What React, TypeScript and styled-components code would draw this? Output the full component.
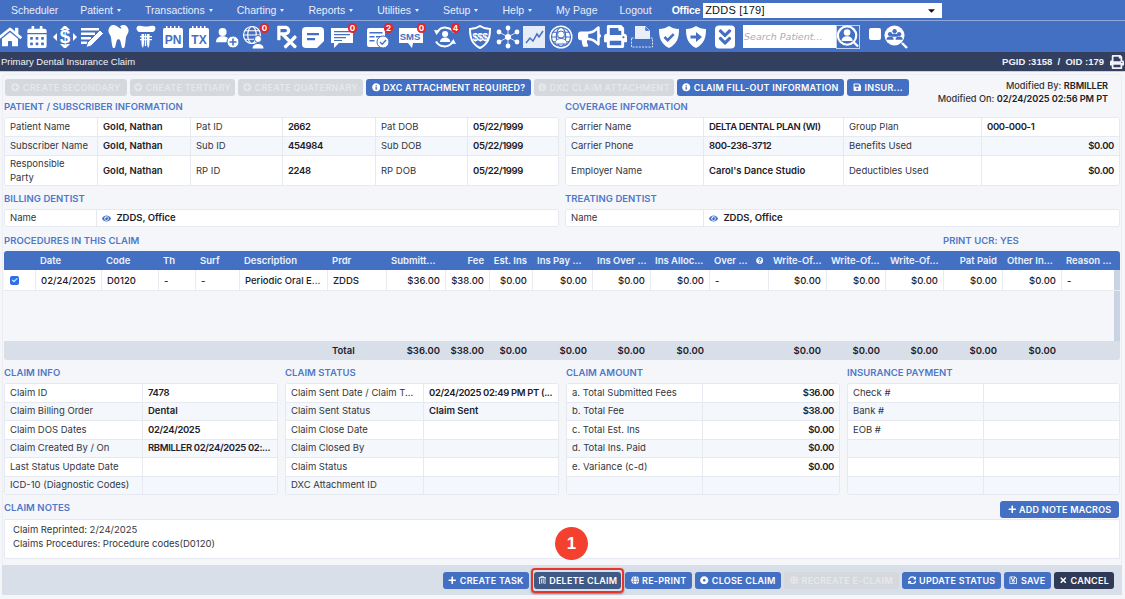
import React from "react";
import styled, { createGlobalStyle } from "styled-components";
import {
  FaHome,
  FaCalendarAlt,
  FaTooth,
  FaPrescription,
  FaBullhorn,
  FaPrint,
  FaAngleDoubleDown,
  FaInfoCircle,
  FaPlusCircle,
  FaPlus,
  FaEye,
  FaQuestionCircle,
  FaRegTrashAlt,
  FaRegSave,
  FaSave,
  FaTimes,
  FaSyncAlt,
  FaDotCircle,
  FaGlobe,
  FaCaretDown,
} from "react-icons/fa";

const BLUE = "#4470c4";
const DARK = "#333f5e";

const GlobalStyle = createGlobalStyle`
  html, body { margin: 0; padding: 0; background: #f5f6f9; }
  body { font-family: "Inter", "Liberation Sans", sans-serif; color: #1f2430; overflow: hidden; }
`;

const Page = styled.div`
  width: 1125px;
  height: 599px;
  position: relative;
  overflow: hidden;
`;

const MenuBar = styled.div`
  height: 20px;
  background: ${BLUE};
  border-bottom: 1px solid #8ea8dc;
  display: flex;
  align-items: center;
  padding-left: 11px;
  gap: 22px;
  font-family: "Liberation Sans", Arial, sans-serif;
  font-size: 10.5px;
  color: #e8eefa;
`;

const MenuItem = styled.span<{ $caret?: boolean }>`
  white-space: nowrap;
  &::after {
    content: "";
    display: ${(p) => (p.$caret ? "inline-block" : "none")};
    border-left: 2.5px solid transparent;
    border-right: 2.5px solid transparent;
    border-top: 3px solid #e8eefa;
    margin: 0 2px 0 4px;
    vertical-align: 2px;
  }
`;

const OfficeLabel = styled.span`
  margin-left: -2px;
  color: #fff;
  font-weight: 700;
  letter-spacing: -0.2px;
`;

const OfficeSelect = styled.div`
  width: 239px;
  height: 15px;
  margin-left: -19px;
  background: #fff;
  color: #111;
  display: flex;
  align-items: center;
  justify-content: space-between;
  padding: 0 5px 0 2px;
  box-sizing: border-box;
  font-size: 11px;
  letter-spacing: 0.2px;
`;

const IconBar = styled.div`
  height: 31px;
  background: ${BLUE};
  display: flex;
  align-items: center;
`;

const IconCell = styled.div<{ $gap: number }>`
  width: 24px;
  height: 24px;
  margin-left: ${(p) => p.$gap}px;
  flex: none;
  position: relative;
  color: #fff;
  display: flex;
  align-items: center;
  justify-content: center;
  svg { display: block; }
`;

const Badge = styled.span`
  position: absolute;
  top: -2px;
  right: -3px;
  min-width: 9px;
  height: 10px;
  border-radius: 5px;
  background: #e5252a;
  color: #fff;
  font-size: 8px;
  font-weight: 700;
  line-height: 10px;
  text-align: center;
`;

const SearchInput = styled.div`
  width: 93px;
  height: 23px;
  margin-left: 6px;
  background: #fff;
  color: #a9adb5;
  font-family: "DejaVu Sans", sans-serif;
  font-style: italic;
  font-size: 9.5px;
  line-height: 23px;
  padding-left: 1px;
  box-sizing: border-box;
  white-space: nowrap;
`;

const SearchButton = styled.div`
  width: 24px;
  height: 24px;
  background: #4470c4;
  border: 1px solid #c4d3ef;
  box-sizing: border-box;
  display: flex;
  align-items: center;
  justify-content: center;
`;

const TinyCheck = styled.div`
  width: 12px;
  height: 12px;
  margin: -5px 3px 0 9px;
  background: #fff;
  border-radius: 2px;
`;

const TitleBar = styled.div`
  height: 19px;
  background: ${DARK};
  color: #f1f3f8;
  font-family: "Liberation Sans", Arial, sans-serif;
  font-size: 9.5px;
  display: flex;
  align-items: center;
  justify-content: space-between;
  padding: 0 1px;
  border-bottom: 1px solid #c9ced8;
`;

const TitleRight = styled.div`
  display: flex;
  align-items: center;
  gap: 6px;
  font-weight: 700;
`;

const Content = styled.div`
  margin: 2px 3px 0 2px;
  padding: 4px 3px 0 3px;
  border: 1px solid #eceef3;
  border-bottom: none;
  border-radius: 4px 4px 0 0;
  box-sizing: border-box;
  position: relative;
`;

const ActionRow = styled.div`
  display: flex;
  gap: 3px;
  height: 17px;
  margin-left: -1px;
  position: relative;
`;

const Btn = styled.div<{ $w: number; $variant?: "blue" | "off" | "dark" | "slate" }>`
  width: ${(p) => p.$w}px;
  height: 17px;
  flex: none;
  box-sizing: border-box;
  border-radius: 3px;
  display: flex;
  align-items: center;
  justify-content: center;
  gap: 3px;
  font-size: 9px;
  font-weight: 600;
  white-space: nowrap;
  letter-spacing: 0.25px;
  color: ${(p) => (p.$variant === "off" ? "#e6e8ec" : "#fff")};
  background: ${(p) =>
    p.$variant === "off"
      ? "#d5d8dd"
      : p.$variant === "dark"
      ? "#2f3a56"
      : p.$variant === "slate"
      ? "#3f5a86"
      : BLUE};
  svg { flex: none; font-size: 8.5px; }
`;

const Modified = styled.div`
  position: absolute;
  right: 10px;
  top: 0;
  font-size: 9.2px;
  line-height: 13px;
  text-align: right;
  font-weight: 500;
  color: #333;
  b { font-weight: 600; color: #222; letter-spacing: -0.1px; }
`;

const TwoCols = styled.div<{ $top: number }>`
  display: grid;
  grid-template-columns: 555px 555px;
  column-gap: 6px;
  margin: ${(p) => p.$top}px 0 0 -2px;
`;

const FourCols = styled.div`
  display: grid;
  grid-template-columns: 274px 274px 274px 273px;
  column-gap: 7px;
  margin-left: -2px;
`;

const SectionTitle = styled.div<{ $indent?: number }>`
  font-size: 9.5px;
  font-weight: 600;
  color: #4f78c8;
  height: 11px;
  line-height: 11px;
  margin: 0 0 5px;
  padding-left: ${(p) => p.$indent ?? 0}px;
  letter-spacing: 0.05px;
  white-space: nowrap;
`;

const Card = styled.div`
  background: #fff;
  border: 1px solid #e6e9f0;
  border-radius: 3px;
  overflow: hidden;
`;

const Row = styled.div<{ $cols: string; $h: number; $alt?: boolean }>`
  display: grid;
  grid-template-columns: ${(p) => p.$cols};
  height: ${(p) => p.$h}px;
  background: ${(p) => (p.$alt ? "#f4f7fc" : "#fff")};
  & + & { border-top: 1px solid #e6e9f0; }
`;

const Cell = styled.div<{ $bold?: boolean; $right?: boolean; $tight?: boolean }>`
  display: flex;
  align-items: center;
  justify-content: ${(p) => (p.$right ? "flex-end" : "flex-start")};
  gap: 3px;
  padding: 0 5px;
  min-width: 0;
  overflow: hidden;
  font-size: 9.5px;
  line-height: 14px;
  font-weight: ${(p) => (p.$bold ? 600 : 400)};
  letter-spacing: ${(p) => (p.$tight ? "-0.35px" : "0")};
  color: ${(p) => (p.$bold ? "#1d2029" : "#33363e")};
  white-space: pre;
  & + & { border-left: 1px solid #e6e9f0; }
  svg { color: ${BLUE}; font-size: 9px; }
`;

const PROC_COLS = "31px 66px 57px 37px 44px 88px 59px 59px 44px 43px 60px 58px 59px 59px 58px 59px 58px 59px 59px 53px 6px";

const ProcTable = styled.div`
  border-radius: 3px;
  overflow: hidden;
  margin: 0 0 7px -2px;
  width: 1116px;
  height: 109px;
  display: flex;
  flex-direction: column;
  background: #f5f6f9;
`;

const ProcRow = styled.div<{ $kind: "head" | "body" | "total" }>`
  display: grid;
  grid-template-columns: ${PROC_COLS};
  height: ${(p) => (p.$kind === "body" ? 21 : 19)}px;
  flex: none;
  background: ${(p) => (p.$kind === "head" ? BLUE : p.$kind === "total" ? "#d9dfe9" : "#fff")};
  color: ${(p) => (p.$kind === "head" ? "#eef2fb" : "#1d2029")};
  font-size: 9.5px;
  font-weight: ${(p) => (p.$kind === "body" ? 500 : 600)};
  border-bottom: ${(p) => (p.$kind === "body" ? "1px solid #e9ebf0" : "none")};
  box-sizing: border-box;
`;

const ProcCell = styled.div<{ $right?: boolean; $line?: boolean }>`
  display: flex;
  align-items: center;
  justify-content: ${(p) => (p.$right ? "flex-end" : "flex-start")};
  padding: 0 5px;
  white-space: nowrap;
  min-width: 0;
  gap: 8px;
  border-left: ${(p) => (p.$line ? "1px solid #e9ebf0" : "none")};
  svg { font-size: 9px; }
`;

const ProcSpacer = styled.div`
  flex: 1;
  display: flex;
  justify-content: flex-end;
`;

const ScrollTrack = styled.div`
  width: 6px;
  background: #c9d3e3;
`;

const CheckBox = styled.span`
  width: 9px;
  height: 9px;
  border-radius: 2px;
  background: #2f6fe6;
  color: #fff;
  font-size: 8px;
  line-height: 9px;
  text-align: center;
  margin-left: 1px;
`;

const NotesHead = styled.div`
  display: flex;
  justify-content: space-between;
  align-items: flex-start;
  height: 18px;
  margin: 6px -1px 0 -2px;
  ${SectionTitle} { margin-top: 1px; }
`;

const NotesBox = styled.div`
  background: #fff;
  border: 1px solid #e6e9f0;
  height: 40px;
  margin: 0 0 0 -2px;
  width: 1116px;
  box-sizing: border-box;
  padding: 3px 8px;
  font-size: 9.5px;
  line-height: 14px;
  color: #33363e;
`;

const Footer = styled.div`
  margin: 6px -4px 0 -4px;
  height: 30px;
  background: #d9dfe9;
  display: flex;
  justify-content: flex-end;
  align-items: center;
  gap: 3px;
  padding-right: 8px;
`;

const DeleteRing = styled.div`
  position: relative;
  display: flex;
  margin: 0 1px 0 2px;
  &::after {
    content: "";
    position: absolute;
    inset: -4px -3px;
    border: 2px solid #e6352b;
    border-radius: 4px;
    box-shadow: 0 1px 2px rgba(0, 0, 0, 0.45);
  }
`;

const StepBubble = styled.div`
  position: absolute;
  left: 555px;
  top: 527px;
  width: 33px;
  height: 33px;
  border-radius: 50%;
  background: #f4402f;
  color: #fff;
  font-family: "Liberation Sans", Arial, sans-serif;
  font-size: 17px;
  font-weight: 700;
  display: flex;
  align-items: center;
  justify-content: center;
`;

// ---- hand drawn toolbar icons ----
const S: React.FC<{ children: React.ReactNode; size?: number }> = ({ children, size = 24 }) => (
  <svg width={size} height={size} viewBox="0 0 24 24" fill="#fff">
    {children}
  </svg>
);

const UserShape = ({ x, y, s = 1, fill = "#fff" }: { x: number; y: number; s?: number; fill?: string }) => (
  <g transform={`translate(${x} ${y}) scale(${s})`} fill={fill}>
    <circle cx="6" cy="3.6" r="3.6" />
    <path d="M0 13c0-3.6 2.6-5.4 6-5.4s6 1.8 6 5.4z" />
  </g>
);

const GlobeLines = ({ cx, cy, r, color = "#fff" }: { cx: number; cy: number; r: number; color?: string }) => (
  <g fill="none" stroke={color} strokeWidth="1.2">
    <circle cx={cx} cy={cy} r={r} />
    <ellipse cx={cx} cy={cy} rx={r / 2} ry={r} />
    <path d={`M${cx - r} ${cy}h${2 * r}M${cx - r + 1.2} ${cy - r / 2}h${2 * r - 2.4}M${cx - r + 1.2} ${cy + r / 2}h${2 * r - 2.4}`} />
  </g>
);

const Lettered = ({ t }: { t: string }) => (
  <S>
    <path d="M5 1h1.5v3H5zM9 1h1.5v3H9zM13 1h1.5v3H13zM17 1h1.5v3H17z" />
    <rect x="2" y="3" width="20" height="20" rx="1.5" />
    <text x="12" y="19" fontSize="12" fontWeight="700" textAnchor="middle" fontFamily="Liberation Sans" fill={BLUE}>
      {t}
    </text>
  </S>
);

const DollarIcon = () => (
  <S>
    <text x="12" y="18" fontSize="19" fontWeight="700" textAnchor="middle" fontFamily="Liberation Sans" fill="#fff">$</text>
    <path d="M0 12l4-4v8zM24 12l-4-4v8zM7 5l4-4 2 0 4 4-3 0-2-1-2 1zM7 19l3 0 2 1 2-1 3 0-4 4-2 0z" />
  </S>
);

const NotesPen = () => (
  <S>
    <path d="M1 3h18v2.5H1zM1 7.5h14V10H1zM1 12h10v2.5H1zM1 16.5h6V19H1z" />
    <path d="M20 5l3.5 3.5L11 21l-5 1.5L7.5 17.5z" stroke={BLUE} strokeWidth="1" />
  </S>
);

const ImplantIcon = () => (
  <S>
    <path d="M4 1c3-1 5 .5 8 .5S17 0 20 1c2.5 1 1.5 5-1 6H5C2.500 6 1.500 2 4 1z" />
    <path d="M7.500 9h2.500v10l-1 4c-1-1-1.500-3-1.500-5zM13 9h2.500v9c0 2-.5 4-1.500 5l-1-4zM10.800 9h1.400v12h-1.400z" />
    <path d="M6 11h12v1.200H6zM6 14h12v1.200H6z" />
  </S>
);

const UserAdd = () => (
  <S>
    <UserShape x={1} y={3} s={1.1} />
    <circle cx="18" cy="17" r="6" stroke={BLUE} strokeWidth="1" />
    <path d="M17.200 13.500h1.600v2.700h2.700v1.600h-2.700v2.700h-1.600v-2.700h-2.700v-1.600h2.700z" fill={BLUE} />
  </S>
);

const GlobeUser = () => (
  <S>
    <GlobeLines cx={10} cy={10} r={8.500} />
    <circle cx="16" cy="14" r="3.500" stroke={BLUE} />
    <path d="M10 24c0-4 3-5.500 6-5.500s6 1.500 6 5.500z" stroke={BLUE} />
  </S>
);

const StickyNote = () => (
  <S>
    <path d="M5 2h14a4 4 0 0 1 4 4v10l-7 7H5a4 4 0 0 1-4-4V6a4 4 0 0 1 4-4z" />
    <path d="M6 8h12v2.200H6zM6 13h8v2.200H6z" fill={BLUE} />
  </S>
);

const ChatLines = () => (
  <S>
    <path d="M1 3h22v15H9l-5 5v-5H1z" />
    <path d="M4 6h16v1.300H4zM4 9h16v1.300H4zM4 12h12v1.300H4zM4 15h8v1H4z" fill={BLUE} />
  </S>
);

const ListCheck = () => (
  <S>
    <rect x="1" y="3" width="18" height="19" rx="2" />
    <path d="M3.500 7h13v1.500h-13zM3.500 11h5v1.500h-5zM10 11h6v1.500h-6zM3.500 15h5v1.500h-5z" fill={BLUE} />
    <circle cx="17" cy="17" r="6" stroke={BLUE} />
    <path d="M14 17l2.200 2.200L20 15" fill="none" stroke={BLUE} strokeWidth="1.400" />
  </S>
);

const SmsIcon = () => (
  <S>
    <path d="M0 3h24v15H14l-1 5-4-5H0z" />
    <text x="11" y="15" fontSize="9.500" fontWeight="700" textAnchor="middle" fontFamily="Liberation Sans" fill={BLUE}>SMS</text>
  </S>
);

const RefreshUser = () => (
  <S>
    <path d="M4.500 6.500A10 10 0 0 1 21 7.500" fill="none" stroke="#fff" strokeWidth="2" />
    <path d="M19.500 17.500A10 10 0 0 1 3 16.500" fill="none" stroke="#fff" strokeWidth="2" />
    <path d="M1 5l6 .5-3.500 4.500zM23 19l-6-.5 3.500-4.500z" />
    <UserShape x={7} y={6} s={0.85} />
  </S>
);

const ShieldShape = () => <path d="M12 1c3 2 6 3 10 3 0 9-2 15-10 19C4 19 2 13 2 4c4 0 7-1 10-3z" />;

const ShieldDollar = () => (
  <S>
    <path d="M12 1c3 2 6 3 10 3 0 9-2 15-10 19C4 19 2 13 2 4c4 0 7-1 10-3z" fill="none" stroke="#fff" strokeWidth="2" />
    <text x="12" y="16" fontSize="10" fontWeight="700" textAnchor="middle" fontFamily="Liberation Sans" fill="#fff" letterSpacing="-0.5">$$$</text>
  </S>
);

const NetworkIcon = () => {
  const spots = [[12, 3], [12, 21], [3, 7], [21, 7], [3, 17], [21, 17]];
  return (
    <S>
      <g stroke="#fff" strokeWidth="0.800">
        {spots.map(([x, y], i) => (
          <line key={i} x1="12" y1="12" x2={x} y2={y} />
        ))}
      </g>
      <circle cx="12" cy="12" r="3" />
      {spots.map(([x, y], i) => (
        <circle key={i} cx={x} cy={y} r="2.400" />
      ))}
    </S>
  );
};

const ChartBox = () => (
  <S>
    <rect x="1" y="1" width="22" height="22" fill="#e6edf8" />
    <path d="M4 18l4-5 3 3 4-7 2 3 4-6" fill="none" stroke={BLUE} strokeWidth="1.500" />
  </S>
);

const GlobeFilled = () => (
  <S>
    <circle cx="12" cy="12" r="11.500" />
    <GlobeLines cx={12} cy={12} r={9.500} color={BLUE} />
    <circle cx="12" cy="9.500" r="3.500" stroke={BLUE} />
    <path d="M6 19c0-4 3-5.500 6-5.500s6 1.500 6 5.500z" stroke={BLUE} />
  </S>
);

const DocScan = () => (
  <S>
    <path d="M5 1h10l5 5v8H5z" fill="#e9eef9" />
    <path d="M15 1l5 5h-5z" fill={BLUE} stroke="#e9eef9" strokeWidth="0.500" />
    <rect x="1.500" y="13" width="21" height="9" fill="none" stroke="#dfe6f5" strokeWidth="1" strokeDasharray="2 1.200" />
  </S>
);

const ShieldCheck = () => (
  <S>
    <ShieldShape />
    <path d="M7.500 12l3.200 3.200 6-6" fill="none" stroke={BLUE} strokeWidth="2.600" />
  </S>
);

const ShieldArrow = () => (
  <S>
    <ShieldShape />
    <path d="M6.500 10.500h5.500V7l6 5-6 5v-3.500H6.500z" fill={BLUE} />
  </S>
);

const ChevronTile = () => (
  <S>
    <rect x="2" y="0.500" width="20" height="23" rx="4" />
    <foreignObject x="2" y="2" width="20" height="20">
      <FaAngleDoubleDown color={BLUE} size={20} />
    </foreignObject>
  </S>
);

const UserSearch = () => (
  <S size={23}>
    <circle cx="11" cy="11" r="10" fill="none" stroke="#fff" strokeWidth="2.400" />
    <UserShape x={5} y={4} s={1} />
    <path d="M18 18l5 5" stroke="#fff" strokeWidth="2.400" />
  </S>
);

const GroupSearch = () => (
  <S>
    <circle cx="10.500" cy="10.500" r="10" />
    <UserShape x={7} y={4} s={0.6} fill={BLUE} />
    <UserShape x={2.500} y={7} s={0.6} fill={BLUE} />
    <UserShape x={11.500} y={7} s={0.6} fill={BLUE} />
    <path d="M18 18l5 5" stroke="#fff" strokeWidth="2.400" />
  </S>
);

const toolbar: { gap: number; icon: React.ReactNode; badge?: string }[] = [
  { gap: -2, icon: <FaHome size={24} /> },
  { gap: 3, icon: <FaCalendarAlt size={22} /> },
  { gap: 4, icon: <DollarIcon /> },
  { gap: 3, icon: <NotesPen /> },
  { gap: 2, icon: <FaTooth size={23} /> },
  { gap: 4, icon: <ImplantIcon /> },
  { gap: 3, icon: <Lettered t="PN" /> },
  { gap: 2, icon: <Lettered t="TX" /> },
  { gap: 4, icon: <UserAdd /> },
  { gap: 3, icon: <GlobeUser />, badge: "0" },
  { gap: 9, icon: <FaPrescription size={26} /> },
  { gap: 2, icon: <StickyNote /> },
  { gap: 5, icon: <ChatLines />, badge: "0" },
  { gap: 12, icon: <ListCheck />, badge: "2" },
  { gap: 9, icon: <SmsIcon />, badge: "0" },
  { gap: 10, icon: <RefreshUser />, badge: "4" },
  { gap: 11, icon: <ShieldDollar /> },
  { gap: 4, icon: <NetworkIcon /> },
  { gap: 2, icon: <ChartBox /> },
  { gap: 3, icon: <GlobeFilled /> },
  { gap: 4, icon: <FaBullhorn size={23} /> },
  { gap: 2, icon: <FaPrint size={23} /> },
  { gap: 3, icon: <DocScan /> },
  { gap: 3, icon: <ShieldCheck /> },
  { gap: 3, icon: <ShieldArrow /> },
  { gap: 5, icon: <ChevronTile /> },
];

const menus: [string, boolean][] = [
  ["Scheduler", false],
  ["Patient", true],
  ["Transactions", true],
  ["Charting", true],
  ["Reports", true],
  ["Utilities", true],
  ["Setup", true],
  ["Help", true],
  ["My Page", false],
  ["Logout", false],
];

const PATIENT_COLS = "92px 93px 92px 93px 92px 1fr";
const COVER_COLS = "137px 140px 138px 1fr";
const NAME_COLS = "91px 1fr";
const HALF_COLS = "137px 1fr";

// digits and capitals run wide in this font, so those values get pulled in
const isWide = (v: string) => /\d|[A-Z]{3}/.test(v);

const patientRows = [
  ["Patient Name", "Gold, Nathan", "Pat ID", "2662", "Pat DOB", "05/22/1999"],
  ["Subscriber Name", "Gold, Nathan", "Sub ID", "454984", "Sub DOB", "05/22/1999"],
  ["Responsible\nParty", "Gold, Nathan", "RP ID", "2248", "RP DOB", "05/22/1999"],
];

const coverageRows = [
  ["Carrier Name", "DELTA DENTAL PLAN (WI)", "Group Plan", "000-000-1"],
  ["Carrier Phone", "800-236-3712", "Benefits Used", "$0.00"],
  ["Employer Name", "Carol's Dance Studio", "Deductibles Used", "$0.00"],
];

const procHead: [React.ReactNode, boolean][] = [
  ["", false], ["Date", false], ["Code", false], ["Th", false], ["Surf", false], ["Description", false],
  ["Prdr", false], ["Submitt...", false], ["Fee", true], ["Est. Ins", true], ["Ins Pay ...", false],
  ["Ins Over ...", false], ["Ins Alloc...", false],
  [<>Over ... <FaQuestionCircle /></>, false],
  ["Write-Of...", false], ["Write-Of...", false], ["Write-Of...", false], ["Pat Paid", true],
  ["Other In...", false], ["Reason ...", false], ["", false],
];

const money = "$0.00";
const procBody: [React.ReactNode, boolean][] = [
  [<CheckBox>✓</CheckBox>, false], ["02/24/2025", false], ["D0120", false], ["-", false], ["-", false],
  ["Periodic Oral E...", false], ["ZDDS", false], ["$36.00", true], ["$38.00", true], [money, true], [money, true],
  [money, true], [money, true], ["-", false], [money, true], [money, true], [money, true], [money, true], [money, true], ["-", false],
];

const procTotal: [string, boolean][] = [
  ["", false], ["", false], ["", false], ["", false], ["", false], ["", false], ["Total", false],
  ["$36.00", true], ["$38.00", true], [money, true], [money, true], [money, true], [money, true], ["", false],
  [money, true], [money, true], [money, true], [money, true], [money, true], ["", false], ["", false],
];

const infoBlocks: { title: string; cols: string; right?: boolean; rows: [string, string][] }[] = [
  {
    title: "CLAIM INFO",
    cols: HALF_COLS,
    rows: [
      ["Claim ID", "7478"],
      ["Claim Billing Order", "Dental"],
      ["Claim DOS Dates", "02/24/2025"],
      ["Claim Created By / On", "RBMILLER 02/24/2025 02:..."],
      ["Last Status Update Date", ""],
      ["ICD-10 (Diagnostic Codes)", ""],
    ],
  },
  {
    title: "CLAIM STATUS",
    cols: HALF_COLS,
    rows: [
      ["Claim Sent Date / Claim T...", "02/24/2025 02:49 PM PT (..."],
      ["Claim Sent Status", "Claim Sent"],
      ["Claim Close Date", ""],
      ["Claim Closed By", ""],
      ["Claim Status", ""],
      ["DXC Attachment ID", ""],
    ],
  },
  {
    title: "CLAIM AMOUNT",
    cols: "135px 1fr",
    right: true,
    rows: [
      ["a. Total Submitted Fees", "$36.00"],
      ["b. Total Fee", "$38.00"],
      ["c. Total Est. Ins", "$0.00"],
      ["d. Total Ins. Paid", "$0.00"],
      ["e. Variance (c-d)", "$0.00"],
      ["", ""],
    ],
  },
  {
    title: "INSURANCE PAYMENT",
    cols: "135px 1fr",
    rows: [
      ["Check #", ""],
      ["Bank #", ""],
      ["EOB #", ""],
      ["", ""],
      ["", ""],
      ["", ""],
    ],
  },
];

export default function App() {
  return (
    <Page>
      <GlobalStyle />
      <MenuBar>
        {menus.map(([label, caret]) => (
          <MenuItem key={label} $caret={caret}>
            {label}
          </MenuItem>
        ))}
        <OfficeLabel>Office</OfficeLabel>
        <OfficeSelect>
          ZDDS [179]
          <FaCaretDown size={11} />
        </OfficeSelect>
      </MenuBar>
      <IconBar>
        {toolbar.map((t, i) => (
          <IconCell key={i} $gap={t.gap}>
            {t.icon}
            {t.badge && <Badge>{t.badge}</Badge>}
          </IconCell>
        ))}
        <SearchInput>Search Patient...</SearchInput>
        <SearchButton>
          <UserSearch />
        </SearchButton>
        <TinyCheck />
        <IconCell $gap={0}>
          <GroupSearch />
        </IconCell>
      </IconBar>
      <TitleBar>
        <span>Primary Dental Insurance Claim</span>
        <TitleRight>
          PGID :3158 &nbsp;/ &nbsp;OID :179
          <FaPrint size={14} />
        </TitleRight>
      </TitleBar>
      <Content>
        <ActionRow>
          <Btn $w={122} $variant="off"><FaPlusCircle /> CREATE SECONDARY</Btn>
          <Btn $w={105} $variant="off"><FaPlusCircle /> CREATE TERTIARY</Btn>
          <Btn $w={125} $variant="off"><FaPlusCircle /> CREATE QUATERNARY</Btn>
          <Btn $w={165}><FaInfoCircle /> DXC ATTACHMENT REQUIRED?</Btn>
          <Btn $w={140} $variant="off"><FaInfoCircle /> DXC CLAIM ATTACHMENT</Btn>
          <Btn $w={167}><FaInfoCircle /> CLAIM FILL-OUT INFORMATION</Btn>
          <Btn $w={62}><FaSave /> INSUR...</Btn>
          <Modified>
            Modified By: <b>RBMILLER</b>
            <br />
            Modified On: <b>02/24/2025 02:56 PM PT</b>
          </Modified>
        </ActionRow>

        <TwoCols $top={5}>
          <div>
            <SectionTitle>PATIENT / SUBSCRIBER INFORMATION</SectionTitle>
            <Card>
              {patientRows.map((r, i) => (
                <Row key={i} $cols={PATIENT_COLS} $h={i === 2 ? 29 : 18} $alt={i === 1}>
                  {r.map((v, j) => (
                    <Cell key={j} $bold={j % 2 === 1} $tight={j % 2 === 1 && isWide(v)}>{v}</Cell>
                  ))}
                </Row>
              ))}
            </Card>
          </div>
          <div>
            <SectionTitle>COVERAGE INFORMATION</SectionTitle>
            <Card>
              {coverageRows.map((r, i) => (
                <Row key={i} $cols={COVER_COLS} $h={i === 2 ? 29 : 18} $alt={i === 1}>
                  {r.map((v, j) => (
                    <Cell key={j} $bold={j % 2 === 1} $tight={j % 2 === 1 && isWide(v)} $right={j === 3 && v.startsWith("$")}>{v}</Cell>
                  ))}
                </Row>
              ))}
            </Card>
          </div>
        </TwoCols>

        <TwoCols $top={7}>
          {["BILLING DENTIST", "TREATING DENTIST"].map((t) => (
            <div key={t}>
              <SectionTitle>{t}</SectionTitle>
              <Card>
                <Row $cols={t[0] === "B" ? NAME_COLS : HALF_COLS} $h={16}>
                  <Cell>Name</Cell>
                  <Cell $bold><FaEye /> ZDDS, Office</Cell>
                </Row>
              </Card>
            </div>
          ))}
        </TwoCols>

        <TwoCols $top={8}>
          <SectionTitle>PROCEDURES IN THIS CLAIM</SectionTitle>
          <SectionTitle $indent={378}>PRINT UCR: YES</SectionTitle>
        </TwoCols>
        <ProcTable>
          <ProcRow $kind="head">
            {procHead.map(([v, right], i) => (
              <ProcCell key={i} $right={right}>{v}</ProcCell>
            ))}
          </ProcRow>
          <ProcRow $kind="body">
            {procBody.map(([v, right], i) => (
              <ProcCell key={i} $right={right} $line={i > 0}>{v}</ProcCell>
            ))}
            <ScrollTrack />
          </ProcRow>
          <ProcSpacer>
            <ScrollTrack />
          </ProcSpacer>
          <ProcRow $kind="total">
            {procTotal.map(([v, right], i) => (
              <ProcCell key={i} $right={right}>{v}</ProcCell>
            ))}
          </ProcRow>
        </ProcTable>

        <FourCols>
          {infoBlocks.map((b) => (
            <div key={b.title}>
              <SectionTitle>{b.title}</SectionTitle>
              <Card>
                {b.rows.map(([k, v], i) => (
                  <Row key={i} $cols={b.cols} $h={17.5} $alt={i % 2 === 1}>
                    <Cell>{k}</Cell>
                    <Cell $bold $right={b.right} $tight={isWide(v)}>{v}</Cell>
                  </Row>
                ))}
              </Card>
            </div>
          ))}
        </FourCols>

        <NotesHead>
          <SectionTitle>CLAIM NOTES</SectionTitle>
          <Btn $w={119}><FaPlus /> ADD NOTE MACROS</Btn>
        </NotesHead>
        <NotesBox>
          Claim Reprinted: 2/24/2025
          <br />
          Claims Procedures: Procedure codes(D0120)
        </NotesBox>

        <Footer>
          <Btn $w={86}><FaPlus /> CREATE TASK</Btn>
          <DeleteRing>
            <Btn $w={87} $variant="slate"><FaRegTrashAlt /> DELETE CLAIM</Btn>
          </DeleteRing>
          <Btn $w={67}><FaGlobe /> RE-PRINT</Btn>
          <Btn $w={86}><FaDotCircle /> CLOSE CLAIM</Btn>
          <Btn $w={115} $variant="off"><FaGlobe /> RECREATE E-CLAIM</Btn>
          <Btn $w={99}><FaSyncAlt /> UPDATE STATUS</Btn>
          <Btn $w={47}><FaRegSave /> SAVE</Btn>
          <Btn $w={60} $variant="dark"><FaTimes /> CANCEL</Btn>
        </Footer>
      </Content>
      <StepBubble>1</StepBubble>
    </Page>
  );
}
